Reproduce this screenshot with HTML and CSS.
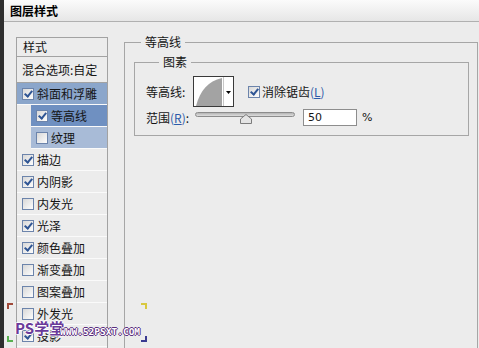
FILE: index.html
```html
<!DOCTYPE html>
<html lang="zh-CN">
<head>
    <meta charset="UTF-8">
    <title>图层样式</title>
    <link rel="stylesheet" href="styles.css">
</head>
<body>

<div class="dialog">
    <div class="titlebar">图层样式</div>

    <div class="content">
        <!-- left style list -->
        <div class="side-list">
            <div class="list-head">样式</div>
            <div class="list-blend">混合选项:自定</div>
            <div class="row sel"><span class="cb on"></span>斜面和浮雕</div>
            <div class="row sub sel-dark"><span class="cb on"></span>等高线</div>
            <div class="row sub sel-light"><span class="cb"></span>纹理</div>
            <div class="row"><span class="cb on"></span>描边</div>
            <div class="row"><span class="cb on"></span>内阴影</div>
            <div class="row"><span class="cb"></span>内发光</div>
            <div class="row"><span class="cb on"></span>光泽</div>
            <div class="row"><span class="cb on"></span>颜色叠加</div>
            <div class="row"><span class="cb"></span>渐变叠加</div>
            <div class="row"><span class="cb"></span>图案叠加</div>
            <div class="row"><span class="cb"></span>外发光</div>
            <div class="row"><span class="cb on"></span>投影</div>
        </div>

        <!-- contour settings -->
        <fieldset class="group">
            <legend>等高线</legend>
            <fieldset class="subgroup">
                <legend>图素</legend>
                <div class="opt-row">
                    <span class="opt-label">等高线:</span>
                    <div class="contour">
                        <svg width="39" height="29" viewBox="0 0 39 29">
                            <rect x="0" y="0" width="29" height="29" fill="#fff"/>
                            <path d="M2,29 C6,14 14,4 28,1 L28,29 Z" fill="#a3a3a3"/>
                            <line x1="29.5" y1="0" x2="29.5" y2="29" stroke="#c8c8c8"/>
                            <rect x="30" y="0" width="9" height="29" fill="#fff"/>
                            <polygon points="32,14 37,14 34.5,17" fill="#000"/>
                        </svg>
                    </div>
                    <span class="cb on aa-box"></span>
                    <span class="aa-text">消除锯齿<span class="key">(<u>L</u>)</span></span>
                </div>
                <div class="opt-row range-row">
                    <span class="opt-label">范围<span class="key">(<u>R</u>)</span>:</span>
                    <div class="slider">
                        <div class="track"></div>
                        <svg class="thumb" width="12" height="10" viewBox="0 0 12 10">
                            <polygon points="6,0.5 11.5,5 11.5,9.5 0.5,9.5 0.5,5" fill="#e4e4e4" stroke="#7c7c7c"/>
                        </svg>
                    </div>
                    <div class="num-input">50</div>
                    <span class="pct">%</span>
                </div>
            </fieldset>
        </fieldset>
    </div>

    <!-- site watermark -->
    <div class="watermark">
        <span class="wm-corner tl"></span>
        <span class="wm-corner bl"></span>
        <span class="wm-corner tr"></span>
        <span class="wm-corner br"></span>
        <span class="wm-logo">PS学堂</span>
        <span class="wm-url">WWW.52PSXT.COM</span>
    </div>
</div>

</body>
</html>
```

FILE: styles.css
```css
body {
    margin: 0;
    font-family: "Noto Sans CJK SC", "DejaVu Sans", sans-serif;
    font-size: 12px;
    color: #151515;
}
.dialog {
    position: relative;
    width: 479px;
    height: 348px;
    overflow: hidden;
    box-sizing: border-box;
    background: #ececec;
    border-left: 4px solid #2e2e2e;
}
.titlebar {
    height: 21px;
    line-height: 22px;
    padding-left: 6px;
    font-weight: bold;
    font-size: 12px;
    color: #000;
    background: linear-gradient(#fbfbfb, #e6e6e6);
    border-bottom: 1px solid #b0b0b0;
}
.content {
    display: flex;
    align-items: flex-start;
    padding: 11px 1px 0 12px;
}

/* left list */
.side-list {
    width: 92px;
    margin-top: 4px;
    box-sizing: border-box;
    border: 1px solid #a2a2a2;
    border-bottom: none;
    height: 330px;
}
.list-head {
    height: 18px;
    line-height: 18px;
    padding-left: 6px;
    border-bottom: 1px solid #a2a2a2;
}
.list-blend {
    height: 25px;
    line-height: 25px;
    padding-left: 5px;
    border-bottom: 1px solid #a2a2a2;
}
.row {
    display: flex;
    align-items: center;
    height: 21px;
    padding-left: 5px;
    border-bottom: 1px solid #fafafa;
}
.row.sub {
    margin-left: 14px;
}
.sel {
    background: #8ba6cb;
}
.sel-dark {
    background: #6f90c1;
}
.sel-light {
    background: #a8bbd7;
}
.row .cb {
    margin-right: 3px;
}

/* checkbox */
.cb {
    position: relative;
    display: inline-block;
    width: 10px;
    height: 10px;
    border: 1px solid #6c84ab;
    background: linear-gradient(135deg, #d8d8d8, #fdfdfd);
    flex-shrink: 0;
}
.cb.on::after {
    content: '';
    position: absolute;
    left: 3px;
    top: 0;
    width: 3px;
    height: 6px;
    border: solid #2f5594;
    border-width: 0 2px 2px 0;
    transform: rotate(40deg);
}

/* right group boxes */
.group {
    flex: 1;
    margin: 0 0 0 16px;
    padding: 0 8px 0 9px;
    height: 340px;
    border: 1px solid #a6a6a6;
}
.group > legend {
    margin-left: 7px;
    padding: 0 4px;
    line-height: 18px;
}
.subgroup {
    margin: 2px 0 0 0;
    padding: 5px 0 9px 11px;
    border: 1px solid #a6a6a6;
}
.subgroup > legend {
    margin-left: 13px;
    padding: 0 4px;
    line-height: 18px;
}
.opt-row {
    display: flex;
    align-items: center;
    height: 31px;
}
.range-row {
    height: 18px;
    margin-top: 1px;
}
.opt-label {
    width: 47px;
}
.range-row .opt-label {
    width: 49px;
}
.key {
    color: #2c5aa8;
}
.contour {
    width: 39px;
    height: 29px;
    border: 1px solid #3a3a3a;
    background: #fff;
}
.contour svg {
    display: block;
}
.aa-box {
    margin-left: 14px;
    margin-right: 2px;
}

/* slider */
.slider {
    position: relative;
    width: 100px;
    height: 18px;
}
.track {
    margin-top: 4px;
    height: 3px;
    border: 1px solid #8c8c8c;
    border-radius: 3px;
    background: linear-gradient(#b4b4b4, #dedede);
}
.thumb {
    position: absolute;
    left: 45px;
    top: 6px;
}
.num-input {
    width: 48px;
    height: 15px;
    line-height: 15px;
    margin-left: 8px;
    padding-left: 4px;
    border: 1px solid #8d8d8d;
    background: #fff;
    font-family: "DejaVu Sans", sans-serif;
    font-size: 11px;
}
.pct {
    margin-left: 5px;
    font-family: "DejaVu Sans", sans-serif;
    font-size: 11px;
}

/* watermark */
.watermark {
    position: absolute;
    left: 0;
    top: 300px;
    width: 150px;
    height: 46px;
}
.wm-corner {
    position: absolute;
    width: 4px;
    height: 4px;
    border-style: solid;
}
.wm-corner.tl {
    left: 3px;
    top: 3px;
    border-color: #a04a3a;
    border-width: 2px 0 0 2px;
}
.wm-corner.bl {
    left: 3px;
    top: 36px;
    border-color: #58b050;
    border-width: 0 0 2px 2px;
}
.wm-corner.tr {
    left: 137px;
    top: 3px;
    border-color: #d8c840;
    border-width: 2px 2px 0 0;
}
.wm-corner.br {
    left: 137px;
    top: 36px;
    border-color: #3a3a90;
    border-width: 0 2px 2px 0;
}
.wm-logo {
    position: absolute;
    left: 11px;
    top: 19px;
    font-size: 15px;
    font-weight: bold;
    line-height: 18px;
    color: #6a3a9a;
    text-shadow: 1px 0 #fff, -1px 0 #fff, 0 1px #fff, 0 -1px #fff;
}
.wm-url {
    position: absolute;
    left: 56px;
    top: 26px;
    font-family: "DejaVu Sans Mono", monospace;
    font-size: 9.5px;
    font-weight: bold;
    line-height: 11px;
    color: #fff;
    text-shadow: 1px 0 #5a2d7e, -1px 0 #5a2d7e, 0 1px #5a2d7e, 0 -1px #5a2d7e;
}
```
